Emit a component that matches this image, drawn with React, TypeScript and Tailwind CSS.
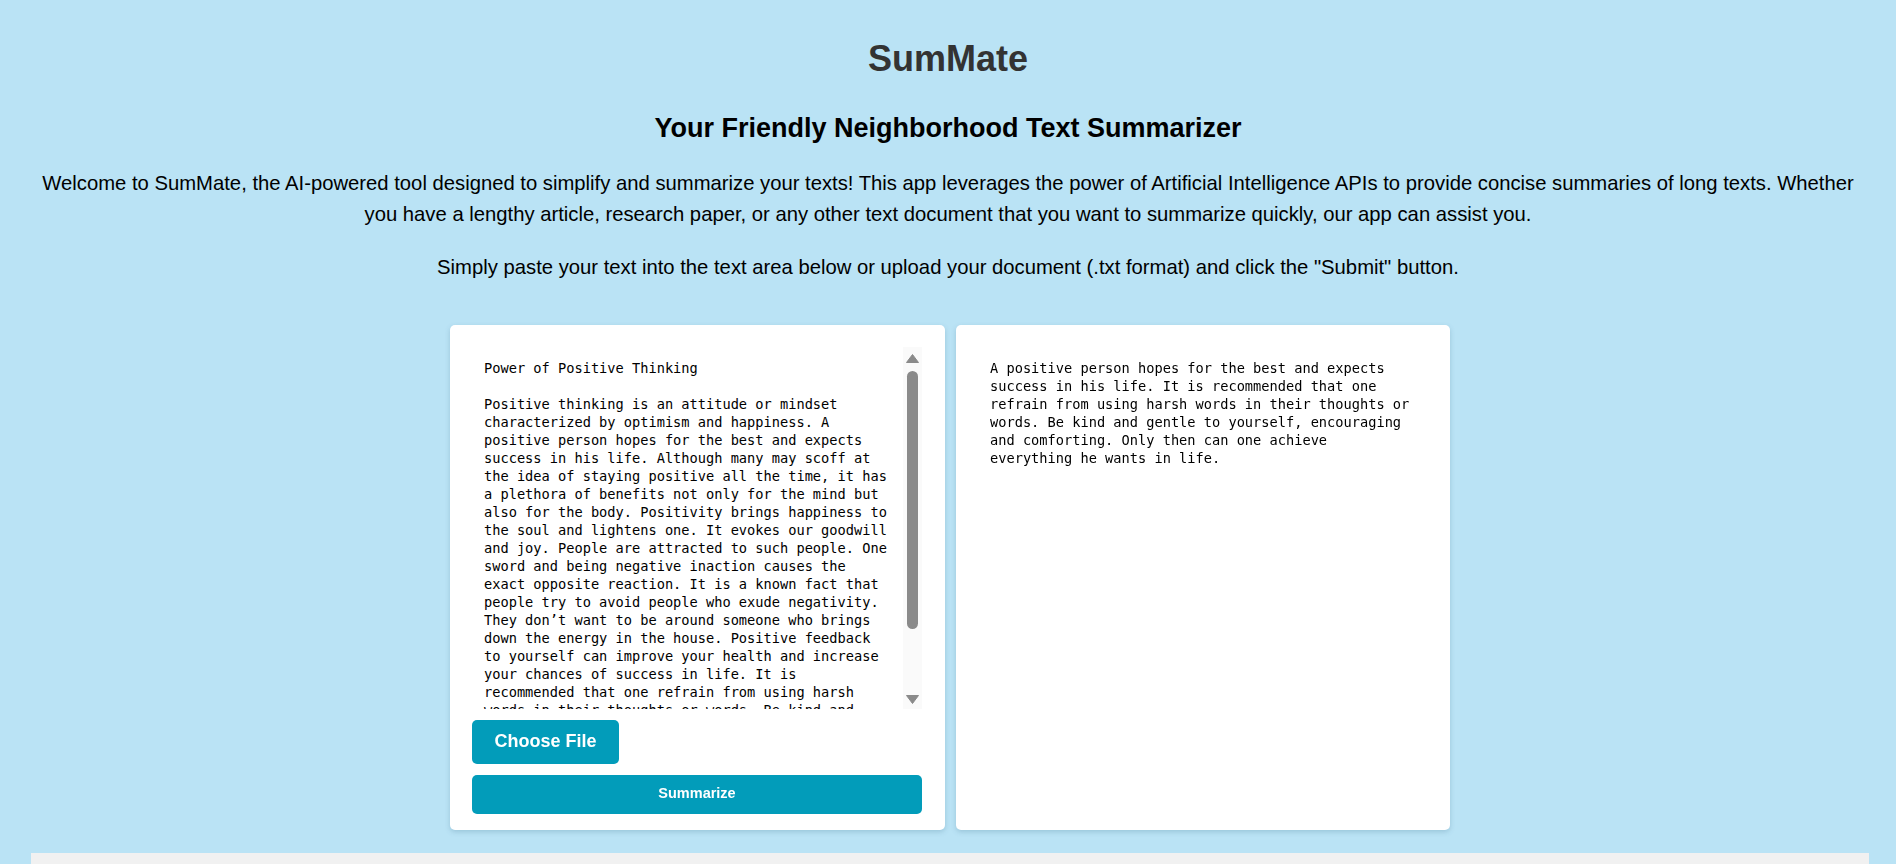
import { useState } from 'react';

const sourceText = `Power of Positive Thinking

Positive thinking is an attitude or mindset
characterized by optimism and happiness. A
positive person hopes for the best and expects
success in his life. Although many may scoff at
the idea of staying positive all the time, it has
a plethora of benefits not only for the mind but
also for the body. Positivity brings happiness to
the soul and lightens one. It evokes our goodwill
and joy. People are attracted to such people. One
sword and being negative inaction causes the
exact opposite reaction. It is a known fact that
people try to avoid people who exude negativity.
They don’t want to be around someone who brings
down the energy in the house. Positive feedback
to yourself can improve your health and increase
your chances of success in life. It is
recommended that one refrain from using harsh
words in their thoughts or words. Be kind and
gentle to yourself, encouraging and comforting.
Only then can one achieve everything he wants in
life.`;

const summaryText = `A positive person hopes for the best and expects
success in his life. It is recommended that one
refrain from using harsh words in their thoughts or
words. Be kind and gentle to yourself, encouraging
and comforting. Only then can one achieve
everything he wants in life.`;

function FakeScrollbar() {
  return (
    <div className="w-[19px] shrink-0 bg-[#fafafa] flex flex-col items-center pt-[7px] pb-[5px]">
      <svg width="13" height="9" viewBox="0 0 13 9">
        <polygon points="6.5,0.5 12.5,8.5 0.5,8.5" fill="#8a8a8a" strokeLinejoin="round" stroke="#8a8a8a" strokeWidth="1" />
      </svg>
      <div className="mt-[8px] w-[11px] h-[258px] rounded-full bg-[#8a8a8a]" />
      <div className="flex-1" />
      <svg width="13" height="9" viewBox="0 0 13 9">
        <polygon points="0.5,0.5 12.5,0.5 6.5,8.5" fill="#8a8a8a" strokeLinejoin="round" stroke="#8a8a8a" strokeWidth="1" />
      </svg>
    </div>
  );
}

export default function App() {
  const [text, setText] = useState(sourceText);

  return (
    <div className="h-screen overflow-hidden bg-[#bae3f5] font-['Liberation_Sans',Arial,sans-serif] text-black">
      <div className="px-[30px] pt-[38px] text-center">
        <h1 className="text-[36px] leading-[42px] font-bold text-[#333333]">SumMate</h1>
        <h2 className="mt-[32px] text-[27px] leading-[32px] font-bold">
          Your Friendly Neighborhood Text Summarizer
        </h2>
        <p className="mt-[24px] text-[20.25px] leading-[30.6px]">
          Welcome to SumMate, the AI-powered tool designed to simplify and summarize your texts! This app
          leverages the power of Artificial Intelligence APIs to provide concise summaries of long texts.
          Whether you have a lengthy article, research paper, or any other text document that you want to
          summarize quickly, our app can assist you.
        </p>
        <p className="mt-[23px] text-[20.25px] leading-[30.6px]">
          Simply paste your text into the text area below or upload your document (.txt format) and click
          the "Submit" button.
        </p>
      </div>

      <div className="mt-[42px] flex justify-center gap-[11px] pl-[4px]">
        <div className="w-[495px] h-[505px] bg-white rounded-[5px] shadow-[0_2px_5px_rgba(60,110,140,0.25)] pt-[22px] pl-[22px] pr-[23px] flex flex-col">
          <div className="h-[362px] flex">
            <textarea
              wrap="off"
              value={text}
              onChange={(e) => setText(e.target.value)}
              className="flex-1 min-w-0 resize-none outline-none bg-white p-[12px] whitespace-pre overflow-x-hidden overflow-y-scroll [scrollbar-width:none] font-['DejaVu_Sans_Mono',monospace] text-[13.67px] leading-[18px] text-black"
            />
            <FakeScrollbar />
          </div>
          <button className="mt-[11px] w-[147px] h-[44px] rounded-[5px] bg-[#029cba] text-white font-bold text-[18px]">
            Choose File
          </button>
          <button className="mt-[11px] w-full h-[39px] rounded-[5px] bg-[#029cba] text-white font-bold text-[14.5px]">
            Summarize
          </button>
        </div>

        <div className="w-[494px] h-[505px] bg-white rounded-[5px] shadow-[0_2px_5px_rgba(60,110,140,0.25)] p-[22px]">
          <div className="p-[12px] whitespace-pre font-['DejaVu_Sans_Mono',monospace] text-[13.67px] leading-[18px] text-black">
            {summaryText}
          </div>
        </div>
      </div>

      <div className="mt-[23px] ml-[31px] mr-[27px] h-[40px] bg-[#f1f1f1]" />
    </div>
  );
}
